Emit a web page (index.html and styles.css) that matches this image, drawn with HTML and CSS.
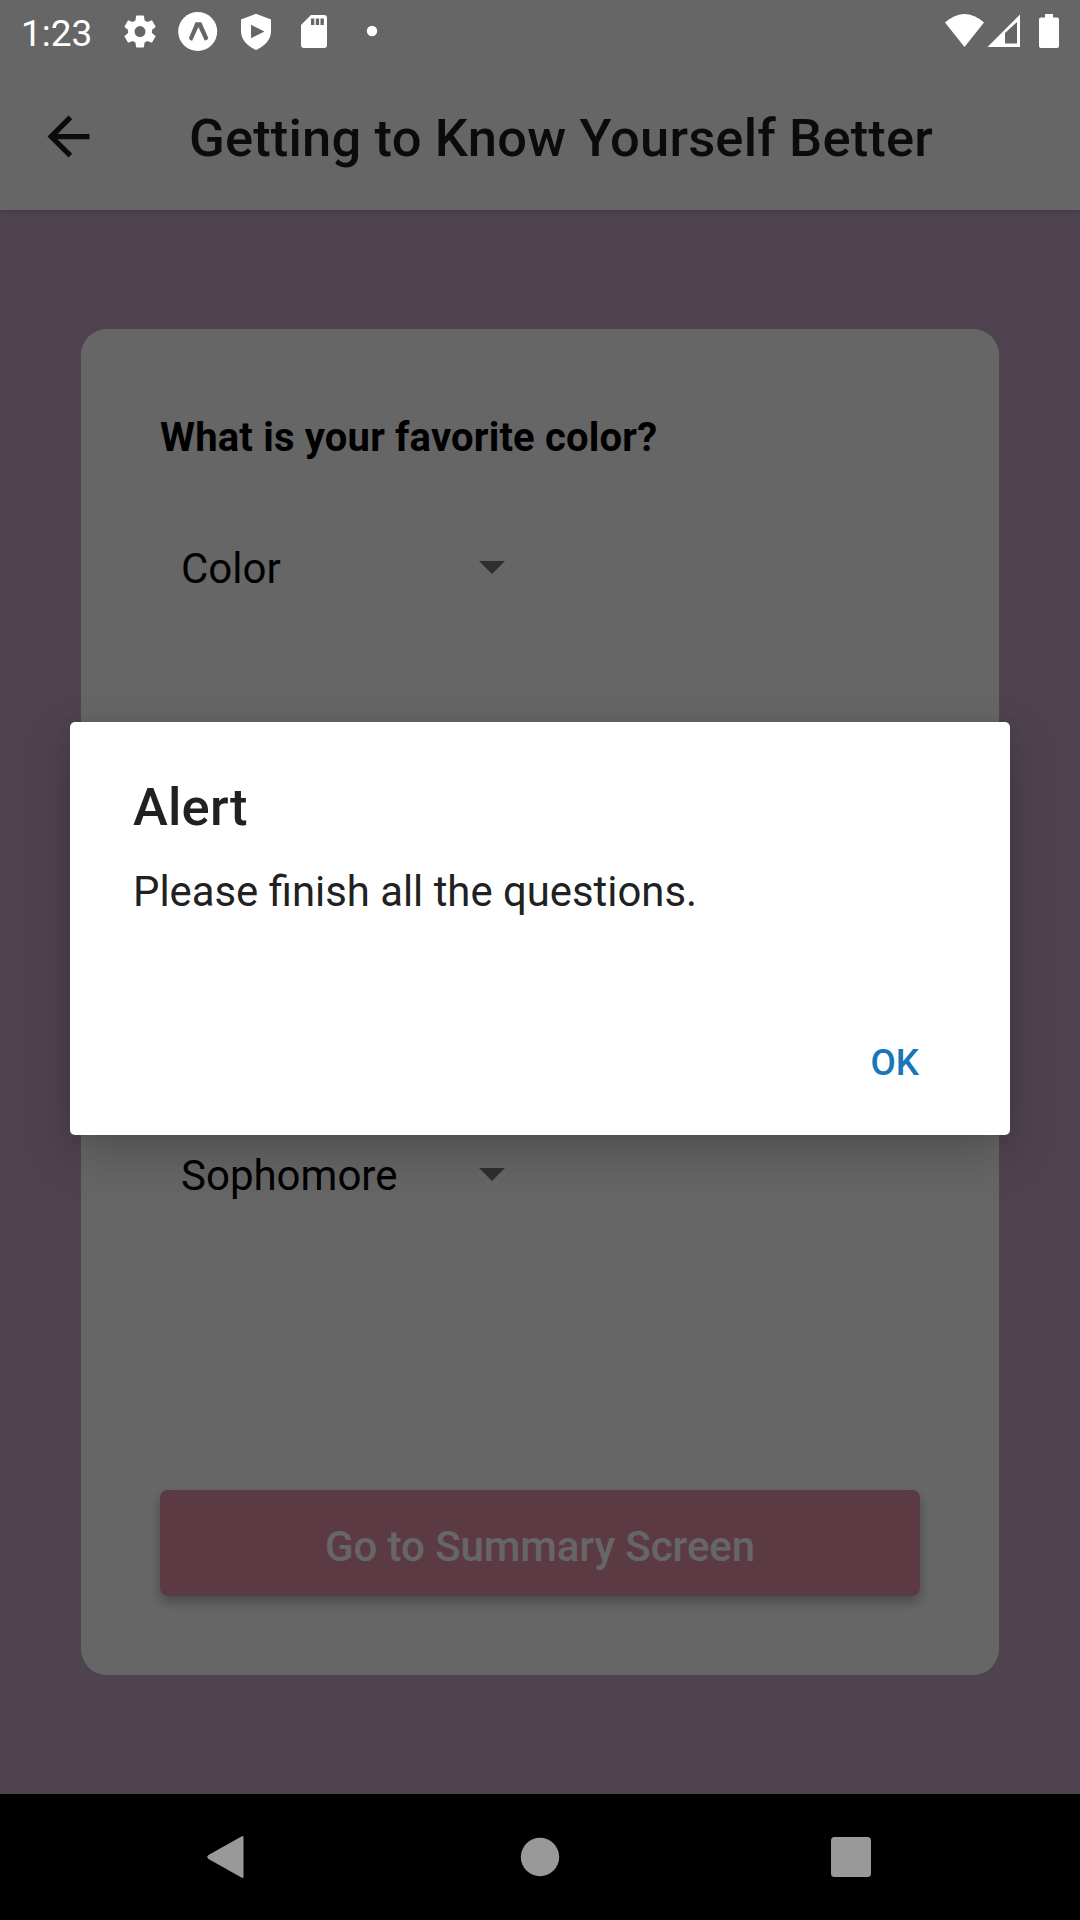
FILE: index.html
```html
<!DOCTYPE html>
<html lang="en">
<head>
<meta charset="utf-8">
<title>Getting to Know Yourself Better</title>
<link rel="stylesheet" href="styles.css">
</head>
<body>
<div class="screen">
  <header class="app-bar">
    <svg class="back" viewBox="0 0 24 24"><path d="M20 11H7.83l5.59-5.59L12 4l-8 8 8 8 1.41-1.41L7.83 13H20z"/></svg>
    <h1 class="app-title">Getting to Know Yourself Better</h1>
  </header>
  <main class="content">
    <section class="card">
      <h2 class="question">What is your favorite color?</h2>
      <div class="picker"><span>Color</span><svg class="caret" viewBox="0 0 26 13"><path d="M0 0h26L13 13z"/></svg></div>
      <div class="picker picker-year"><span>Sophomore</span><svg class="caret" viewBox="0 0 26 13"><path d="M0 0h26L13 13z"/></svg></div>
      <button class="submit">Go to Summary Screen</button>
    </section>
  </main>
  <nav class="nav-bar">
    <svg class="nav-icon" viewBox="0 0 42 42"><path d="M36.5 1.2V40.8Q36.5 42.8 34 41.2L1.5 23Q-1 21 1.5 19L34 .8Q36.5-.8 36.5 1.2z"/></svg>
    <svg class="nav-icon" viewBox="0 0 42 42"><circle cx="21" cy="21" r="19.2"/></svg>
    <svg class="nav-icon" viewBox="0 0 42 42"><rect x="1" y="1" width="40" height="40" rx="3.5"/></svg>
  </nav>
</div>

<div class="overlay">
  <div class="dialog">
    <h2 class="dialog-title">Alert</h2>
    <p class="dialog-text">Please finish all the questions.</p>
    <button class="dialog-ok">OK</button>
  </div>
</div>

<div class="status-bar">
  <span class="time">1:23</span>
  <svg class="notices" viewBox="120 0 260 63">
    <path transform="translate(120.1 11.6) scale(1.66)" d="M19.14 12.94c.04-.3.06-.61.06-.94 0-.32-.02-.64-.07-.94l2.03-1.58c.18-.14.23-.41.12-.61l-1.92-3.32c-.12-.22-.37-.29-.59-.22l-2.39.96c-.5-.38-1.03-.7-1.62-.94l-.36-2.54c-.04-.24-.24-.41-.48-.41h-3.84c-.24 0-.43.17-.47.41l-.36 2.54c-.59.24-1.13.57-1.62.94l-2.39-.96c-.22-.08-.47 0-.59.22L2.74 8.87c-.12.21-.08.47.12.61l2.03 1.58c-.05.3-.09.63-.09.94s.02.64.07.94l-2.03 1.58c-.18.14-.23.41-.12.61l1.92 3.32c.12.22.37.29.59.22l2.39-.96c.5.38 1.03.7 1.62.94l.36 2.54c.05.24.24.41.48.41h3.84c.24 0 .44-.17.47-.41l.36-2.54c.59-.24 1.13-.56 1.62-.94l2.39.96c.22.08.47 0 .59-.22l1.92-3.32c.12-.22.07-.47-.12-.61zM12 15.3a3.3 3.3 0 1 1 0-6.6 3.3 3.3 0 0 1 0 6.6z"/>
    <circle cx="197.700" cy="31.500" r="19.5"/>
    <path class="cutout" d="M195.500 22.300h5.800l7 15.800q-1 2.600-3.600 2.500l-6.300-13.600-6.100 13.600q-2.500.3-3.300-2.500z"/>
    <path d="M256 13.700L271 19.500V31q0 12-15 19-15-7-15-19V19.500z"/>
    <path class="cutout" d="M251 24.800l13.500 6.700L251 38.300z"/>
    <path d="M311 15h13q3 0 3 3v27q0 3-3 3h-20q-3 0-3-3V25z"/>
    <path class="cutout" d="M311 18.500h3.300v6.500H311zM315.800 18.500h3.300v6.500h-3.300zM320.500 18.500h3.300v6.500h-3.300z"/>
    <circle cx="372" cy="31" r="5.2"/>
  </svg>
  <svg class="signals" viewBox="944 0 116 63">
    <path d="M945 22.500Q964.500 5.500 984 22.500L964.500 47z"/>
    <path fill-rule="evenodd" d="M987.500 47L1020 14.500V47zM1005 33v10.500h12V22z"/>
    <path d="M1045 14h8v3.500h4q2 0 2 2v26.500q0 2-2 2h-16q-2 0-2-2v-26.500q0-2 2-2h4z"/>
  </svg>
</div>
</body>
</html>
```
FILE: styles.css
```css
* { box-sizing: border-box; }

body {
  margin: 0;
  width: 1080px;
  height: 1920px;
  overflow: hidden;
  position: relative;
  font-family: Roboto, sans-serif;
}

h1, h2, p { margin: 0; font-weight: 500; }
button { border: 0; font-family: inherit; }
svg { display: block; }

.screen {
  height: 1920px;
  display: flex;
  flex-direction: column;
}

.app-bar {
  height: 210px;
  padding: 63px 0 0 37px;
  display: flex;
  align-items: center;
  background: #fff;
  box-shadow: 0 2px 8px rgba(0, 0, 0, .16);
  z-index: 1;
}

.back { width: 63px; height: 63px; fill: #1c1c1e; }

.app-title {
  margin-left: 89px;
  padding-top: 3px;
  font-size: 52.5px;
  line-height: 62px;
  letter-spacing: .17px;
  color: #1c1c1e;
  white-space: nowrap;
}

.content {
  flex: 1;
  padding: 119px 81px;
  background: #c5a7c5;
}

.card {
  height: 1346px;
  padding: 79px;
  display: flex;
  flex-direction: column;
  background: #fff;
  border-radius: 26px;
}

.question {
  margin-top: 6px;
  font-size: 40px;
  line-height: 48px;
  font-weight: 700;
  letter-spacing: .18px;
}

.picker {
  width: 365.5px;
  height: 60px;
  margin-top: 77px;
  padding: 0 21px;
  display: flex;
  align-items: center;
  justify-content: space-between;
  font-size: 42px;
  line-height: 60px;
}

.picker-year { margin-top: 547px; }

.caret { width: 26px; height: 13px; margin-bottom: 3px; fill: #757575; }

.submit {
  height: 106px;
  margin-top: auto;
  padding: 6px 0 0;
  border-radius: 8px;
  background: #e691aa;
  color: #fff;
  font-size: 42px;
  font-weight: 500;
  letter-spacing: -.08px;
  box-shadow: 0 6px 12px rgba(0, 0, 0, .28);
}

.nav-bar {
  height: 126px;
  padding: 0 208px 0 207px;
  display: flex;
  align-items: center;
  justify-content: space-between;
  background: #000;
}

.nav-icon { width: 42px; height: 42px; fill: #999; }

/* the scrim stops above the system navigation bar */
.overlay {
  position: absolute;
  inset: 0 0 126px;
  z-index: 2;
  padding-top: 722px;
  background: rgba(0, 0, 0, .6);
}

.dialog {
  width: 940px;
  height: 413px;
  margin: 0 auto;
  padding: 54px 63px 0;
  display: flex;
  flex-direction: column;
  align-items: flex-start;
  border-radius: 5px;
  background: #fff;
  color: #212121;
  box-shadow: 0 18px 50px rgba(0, 0, 0, .22), 0 0 16px rgba(0, 0, 0, .06);
}

.dialog-title { font-size: 52.5px; line-height: 62px; letter-spacing: .2px; }

.dialog-text {
  margin-top: 29px;
  font-size: 41.85px;
  line-height: 50px;
  font-weight: 400;
}

.dialog-ok {
  align-self: flex-end;
  margin: 122px 28px 0 0;
  padding: 0;
  background: none;
  color: #1976b8;
  font-size: 36.75px;
  line-height: 48px;
  font-weight: 500;
}

.status-bar {
  position: absolute;
  inset: 0 0 auto;
  z-index: 3;
  height: 63px;
  padding: 0 20px 0 21px;
  display: flex;
  color: #fff;
  fill: #fff;
}

.time {
  width: 99px;
  padding-top: 2px;
  font-size: 37px;
  line-height: 63px;
}

.notices { width: 260px; height: 63px; }
.signals { width: 116px; height: 63px; margin-left: auto; }
.cutout { fill: #666; }
```
